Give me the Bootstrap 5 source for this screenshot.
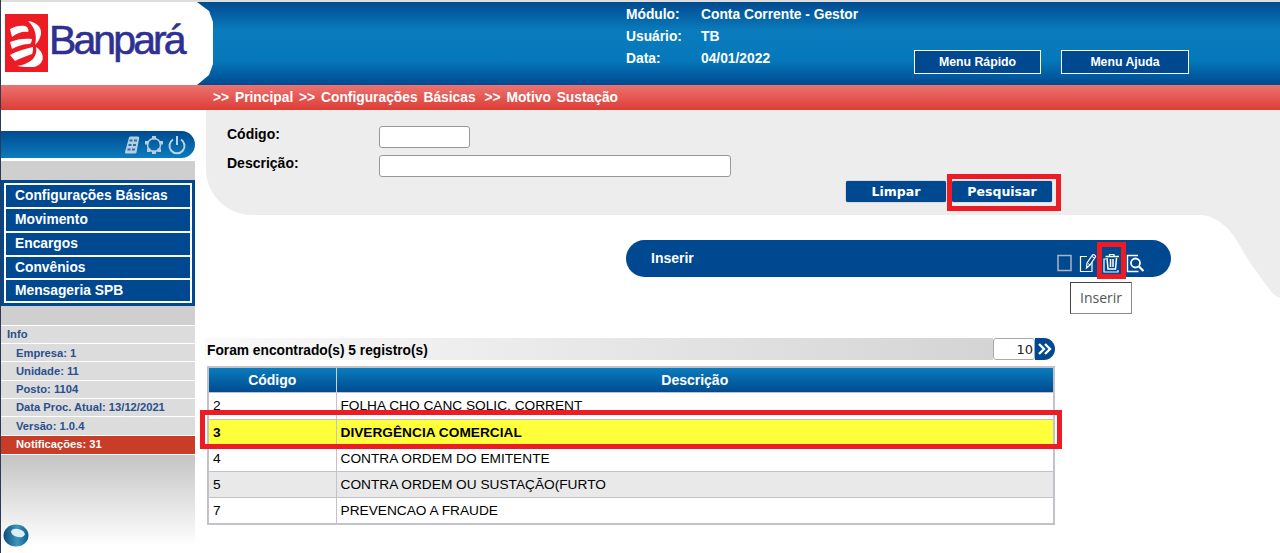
<!DOCTYPE html>
<html lang="pt-BR">
<head>
  <meta charset="UTF-8" />
  <meta name="viewport" content="width=device-width, initial-scale=1.0"/>
  <title>Banpará - Motivo Sustação</title>
  <link href="https://cdn.jsdelivr.net/npm/bootstrap@5.3.0/dist/css/bootstrap.min.css" rel="stylesheet">
  <script src="https://cdn.jsdelivr.net/npm/bootstrap@5.3.0/dist/js/bootstrap.bundle.min.js"></script>
  <style>
    body { font-family: "Liberation Sans", Arial, sans-serif; font-size: 13.8px; color: #000; background: #fff; height: 553px; overflow: hidden; border-left: 1px solid #2b3a55; }
    .topo { height: 85px; border-top: 2px solid #ddd; background: linear-gradient(#004a90, #0a7cbd 35%, #0578bb 70%, #004a90); color: #fff; }
    .logo-area { width: 212px; height: 83px; flex: none; padding: 12px 0 0 4px; background: #fff; clip-path: polygon(0 0, 196px 0, 208px 9px, 212px 20px, 212px 62px, 208px 73px, 196px 83px, 0 83px); }
    .logo-nome { font-size: 41px; letter-spacing: -2.9px; color: #2e3192; line-height: 1; margin-top: 6px; margin-left: 1px; -webkit-text-stroke: .6px #2e3192; }
    .info-topo { width: 288px; margin: 0 0 0 413px; padding-top: 2px; font-weight: 700; line-height: 21.8px; }
    .info-topo dt { width: 75px; font-weight: 700; }
    .info-topo dd { margin: 0; }
    .btn-topo { width: 127px; height: 24px; border: 1px solid #fff; background: #004990; color: #fff; font-weight: 700; font-size: 12.3px; border-radius: 0; padding: 0; }
    .btn-topo:last-child { width: 128px; }
    .botoes-topo { gap: 20px; padding-top: 48px; }
    .faixa { height: 25px; background: linear-gradient(#ec7370, #dd3d35); color: #fff; font-weight: 700; padding-left: 212px; line-height: 25px; word-spacing: 2px; }
    .salto { margin-left: 3px; }
    .lateral { width: 194px; height: 435px; flex: none; padding-top: 21px; }
    .pilula { height: 27px; background: linear-gradient(#004a90, #0a7cbd); border-radius: 0 14px 14px 0; padding-right: 8px; gap: 3px; }
    .cinza-lat { height: 19px; margin-top: 3px; background: #cfcfcf; }
    .menu-lat { background: #004990; padding: 3px 3px 3px 3px; }
    .menu-lat a { display: block; height: 26px; border: 2px solid #fff; margin-top: -2px; color: #fff; font-weight: 700; line-height: 22px; padding-left: 9px; text-decoration: none; }
    .menu-lat a:first-child { margin-top: 0; }
    .menu-lat a:nth-child(n+4) { height: 25px; line-height: 21px; }
    .cinza-lat2 { height: 19px; background: #cfcfcf; }
    .info-lat div { height: 18px; border-top: 1px solid #fff; background: #dcdcdc; color: #2a4f8d; font-weight: 700; font-size: 11.2px; line-height: 17px; padding-left: 15px; }
    .info-lat div:nth-child(2) { line-height: 18px; }
    .info-lat div:nth-child(3), .info-lat div:nth-child(6) { height: 19px; line-height: 18px; }
    .info-lat div.titulo { padding-left: 6px; }
    .info-lat div.alerta { background: #c93c28; color: #fff; border-bottom: 1px solid #fff; height: 20px; }
    .fundo-lat { height: 91px; background: linear-gradient(#c4c4c4, #fff); padding: 69px 0 0 2px; }
    .principal { flex: 1; min-width: 0; position: relative; padding-left: 11px; }
    .painel { height: 105px; background: #ededed; border-bottom-left-radius: 46px; padding: 16px 0 0 21px; position: relative; }
    .rotulo { width: 152px; font-weight: 700; font-size: 14px; line-height: 16px; padding-bottom: 6px; }
    .campo { display: block; height: 22px; border: 1px solid #999; border-radius: 3px; background: #fff; padding: 0 3px; }
    .campo-cod { width: 91px; }
    .campo-desc { width: 352px; }
    .linha-campo + .linha-campo { margin-top: 7px; }
    .acoes { gap: 6px; margin-left: 619px; margin-top: 4px; }
    .btn-azul { width: 100px; height: 21px; background: #004990; color: #fff; border: 0; border-radius: 2px; font-family: "DejaVu Sans", sans-serif; font-weight: 700; font-size: 12.5px; padding: 1px 0 0; box-shadow: 0 0 1px #333; }
    .curva { position: absolute; right: 0; top: 105px; }
    .barra-inserir { margin-top: 25px; margin-left: 420px; width: 545px; height: 37px; border-radius: 19px; background: #004990; color: #fff; font-weight: 700; font-size: 14px; padding: 0 27px 0 25px; }
    .icones-barra { gap: 6px; padding-top: 8px; }
    .resultado { margin-top: 61px; width: 850px; height: 22px; margin-left: -1px; }
    .resultado-texto { flex: 1; background: linear-gradient(90deg, #fafafa, #d4d4d4); font-weight: 700; font-size: 13.75px; line-height: 26px; padding-left: 2px; }
    .qtd { width: 42px; height: 22px; border: 1px solid #aaa; border-radius: 3px; background: #fff; text-align: right; padding: 0 1px; font-family: "DejaVu Sans", sans-serif; font-size: 13px; color: #222; }
    .ir { width: 20px; height: 22px; border: 0; border-radius: 0 11px 11px 0; background: #004990; padding: 0; }
    .tabela { width: 848px; margin-top: 6px; margin-left: 1px; border-collapse: collapse; table-layout: fixed; border: 2px solid #c3c2ca; }
    .tabela th { height: 25px; padding: 0; background: linear-gradient(#0a7cbd, #004a90); color: #fff; text-align: center; font-size: 14px; border-right: 1px solid #d0d0d8; line-height: 1; }
    .tabela td { height: 26px; padding: 2px 4px 0; font-size: 13.7px; border: 1px solid #c3c2ca; line-height: 1; }
    .tabela tbody tr:first-child td { height: 27px; padding-top: 1px; }
    .tabela tbody tr:last-child td { height: 27px; }
    .tabela tr.par td { background: #e9e9e9; }
    .tabela tr.marcada td { background: #ffff3b; font-weight: 700; }
    .marca { position: absolute; border: 5px solid #ed1c24; pointer-events: none; }
    .marca-pesquisar { left: 752px; top: 64px; width: 114px; height: 37px; }
    .marca-lixeira { left: 902px; top: 132px; width: 29px; height: 37px; }
    .marca-linha { left: 5px; top: 300px; width: 862px; height: 39px; }
    .dica { position: absolute; left: 875px; top: 172px; width: 62px; height: 32px; background: #fff; border: 1px solid #8a8a8a; border-top-color: #444; border-left-color: #444; font-family: "Open Sans", sans-serif; font-size: 14px; line-height: 30px; text-align: center; color: #555; }
  </style>
</head>
<body>
  <header class="topo d-flex">
    <div class="logo-area d-flex">
      <svg width="43" height="58" viewBox="0 0 43 58" class="flex-shrink-0"><rect width="43" height="58" fill="#ed1c24"/><g fill="#fff"><path d="M23 7C31 8 37 13 36 20C35 25 33 28 30 31C32 24 31 14 23 7Z"/><path d="M5 15C10 12 16 11 20 12C23 13 24 16 23 18C18 17 12 19 7 23Z"/><path d="M5 28C12 25 20 24 27 25C27 27 26 29 25 30C18 30 12 32 7 35Z"/><path d="M5 41C12 37 20 35 28 33C28 36 28 38 27 40C22 42 15 44 10 47Z"/><path d="M31 33C37 37 39 42 37 47C35 51 31 53 27 53C22 53 16 53 12 52C19 51 25 48 28 45C31 41 32 37 31 33Z"/></g></svg>
      <div class="logo-nome">Banpará</div>
    </div>
    <dl class="info-topo">
      <div class="d-flex"><dt>Módulo:</dt><dd>Conta Corrente - Gestor</dd></div>
      <div class="d-flex"><dt>Usuário:</dt><dd>TB</dd></div>
      <div class="d-flex"><dt>Data:</dt><dd>04/01/2022</dd></div>
    </dl>
    <div class="botoes-topo d-flex align-items-start">
      <button class="btn-topo">Menu Rápido</button>
      <button class="btn-topo">Menu Ajuda</button>
    </div>
  </header>
  <nav class="faixa">&gt;&gt; Principal &gt;&gt; Configurações Básicas <span class="salto">&gt;&gt; Motivo Sustação</span></nav>

  <div class="d-flex">
    <aside class="lateral">
      <div class="pilula d-flex justify-content-end align-items-center">
        <svg width="18" height="20" viewBox="0 0 18 20"><path d="M6 2.500Q6.300 1.500 7.500 1.500L15 1.500Q16.500 1.500 16.200 3L13.500 17.500Q13.200 18.500 12 18.500L3 18.500Q1.700 18.500 2 17Z" fill="#b5cfe2"/><g fill="#2a6ea5"><rect x="6.500" y="4.500" width="3" height="2"/><rect x="11" y="4.500" width="3" height="2"/><rect x="5.500" y="9" width="3" height="2"/><rect x="10" y="9" width="3" height="2"/><rect x="4.500" y="13.500" width="3" height="2"/><rect x="9" y="13.500" width="3" height="2"/></g></svg>
        <svg width="20" height="20" viewBox="0 0 20 20"><circle cx="10" cy="10" r="6.500" fill="none" stroke="#b5cfe2" stroke-width="1.500"/><g fill="#b5cfe2"><rect x="8" y="1" width="4" height="3.500"/><rect x="8" y="15.500" width="4" height="3.500"/><rect x="1" y="6" width="3.500" height="3.500"/><rect x="15.500" y="6" width="3.500" height="3.500"/><rect x="3" y="13.500" width="3.500" height="3.500"/><rect x="13.500" y="13.500" width="3.500" height="3.500"/></g></svg>
        <svg width="20" height="20" viewBox="0 0 20 20" fill="none" stroke="#b5d5ea" stroke-width="2"><path d="M6 4.500A7.500 7.500 0 1 0 14 4.500"/><path d="M10 1V10"/></svg>
      </div>
      <div class="cinza-lat"></div>
      <div class="menu-lat">
        <a href="#">Configurações Básicas</a>
        <a href="#">Movimento</a>
        <a href="#">Encargos</a>
        <a href="#">Convênios</a>
        <a href="#">Mensageria SPB</a>
      </div>
      <div class="cinza-lat2"></div>
      <div class="info-lat">
        <div class="titulo">Info</div>
        <div>Empresa: 1</div>
        <div>Unidade: 11</div>
        <div>Posto: 1104</div>
        <div>Data Proc. Atual: 13/12/2021</div>
        <div>Versão: 1.0.4</div>
        <div class="alerta">Notificações: 31</div>
      </div>
      <div class="fundo-lat">
        <svg width="26" height="23" viewBox="0 0 26 23" class="d-block"><defs><linearGradient id="globo" x1="0" x2="1" y1="0" y2="0"><stop offset="0" stop-color="#0a4a7c"/><stop offset="0.55" stop-color="#3f97b8"/><stop offset="1" stop-color="#0b5f90"/></linearGradient></defs><ellipse cx="13" cy="11.500" rx="12.500" ry="11" fill="url(#globo)"/><ellipse cx="15" cy="9" rx="7" ry="4" fill="#dceff4" transform="rotate(15 15 9)"/></svg>
      </div>
    </aside>

    <main class="principal">
      <section class="painel">
        <div class="linha-campo d-flex align-items-center"><label class="rotulo">Código:</label><input class="campo campo-cod" type="text"></div>
        <div class="linha-campo d-flex align-items-center"><label class="rotulo">Descrição:</label><input class="campo campo-desc" type="text"></div>
        <div class="acoes d-flex">
          <button class="btn-azul">Limpar</button>
          <button class="btn-azul">Pesquisar</button>
        </div>
      </section>
      <svg class="curva" width="80" height="83" viewBox="0 0 80 83"><path d="M0 0H80V83C75 81 72 78 70 75L53 52C42 36 35 20 27 13C20 6 10 0 0 0Z" fill="#ededed"/></svg>

      <div class="barra-inserir d-flex justify-content-between align-items-center">
        <span>Inserir</span>
        <div class="icones-barra d-flex align-items-center">
          <svg width="17" height="20" viewBox="0 0 17 20"><rect x="2" y="2.500" width="13" height="15" fill="none" stroke="#aab4c0" stroke-width="1.500"/></svg>
          <svg width="18" height="20" viewBox="0 0 18 20" fill="none" stroke="#fff" stroke-width="1.200"><path d="M8 3.500H1.500V18.500H13V9"/><path d="M7.500 15L8 10L13.500 2C14.500 1 16.800 2.200 16.500 3.800L11 12Z"/><path d="M9 10.500L11 12M13 3.500L15.500 5" stroke-width="1"/></svg>
          <svg width="17" height="20" viewBox="0 0 17 20" fill="none" stroke="#fff" stroke-width="1.200"><path d="M3 6H1V19H15V17"/><path d="M2.500 3.500H16" stroke-width="1.500"/><path d="M6.500 3.500V1.500H11V3.500"/><path d="M4 5L5 16H12.500L13.500 5" stroke-width="1.500"/><path d="M7.500 6V14M10 6V14" stroke-width="1.500"/></svg>
          <svg width="18" height="20" viewBox="0 0 18 20" fill="none" stroke="#fff" stroke-width="1.400"><path d="M12 2.500H1.500V18.500H12.500"/><circle cx="9.500" cy="10" r="4.500" stroke-width="1.800"/><path d="M13 13.500L17.500 18" stroke-width="2.200"/></svg>
        </div>
      </div>

      <div class="resultado d-flex">
        <div class="resultado-texto">Foram encontrado(s) 5 registro(s)</div>
        <input class="qtd" type="text" value="10">
        <button class="ir"><svg width="16" height="12" viewBox="0 0 16 12" fill="none" stroke="#fff" stroke-width="2.400" class="d-block mx-auto"><path d="M2 1L7 6L2 11M8 1L13 6L8 11"/></svg></button>
      </div>

      <table class="tabela">
        <colgroup><col style="width:128px"><col></colgroup>
        <thead><tr><th>Código</th><th>Descrição</th></tr></thead>
        <tbody>
          <tr><td>2</td><td>FOLHA CHQ CANC SOLIC. CORRENT</td></tr>
          <tr class="marcada"><td>3</td><td>DIVERGÊNCIA COMERCIAL</td></tr>
          <tr><td>4</td><td>CONTRA ORDEM DO EMITENTE</td></tr>
          <tr class="par"><td>5</td><td>CONTRA ORDEM OU SUSTAÇÃO(FURTO</td></tr>
          <tr><td>7</td><td>PREVENCAO A FRAUDE</td></tr>
        </tbody>
      </table>

      <div class="marca marca-pesquisar"></div>
      <div class="marca marca-lixeira"></div>
      <div class="marca marca-linha"></div>
      <div class="dica">Inserir</div>
    </main>
  </div>
</body>
</html>
